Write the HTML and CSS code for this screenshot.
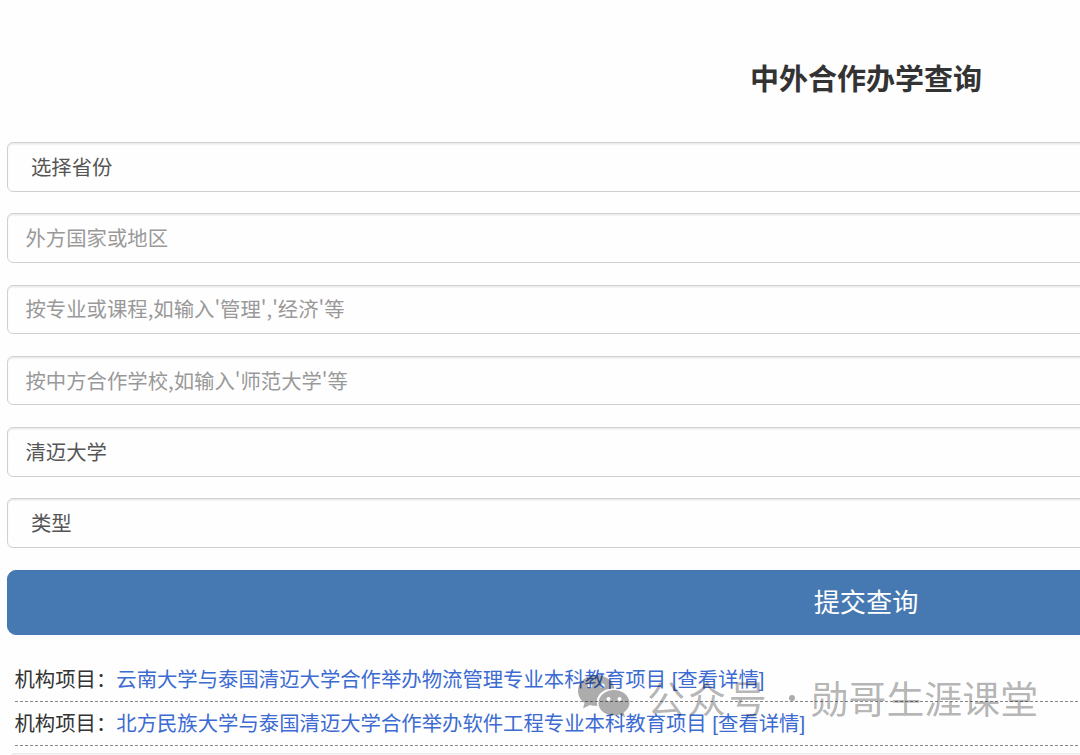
FILE: index.html
```html
<!DOCTYPE html>
<html lang="zh-CN">
<head>
    <meta charset="UTF-8">
    <title>中外合作办学查询</title>
    <link rel="stylesheet" href="styles.css">
</head>
<body>
    <div class="container">
        <h3 class="title">中外合作办学查询</h3>
        <form class="search-form">
            <select class="form-control">
                <option>选择省份</option>
            </select>
            <input class="form-control" type="text" placeholder="外方国家或地区">
            <input class="form-control" type="text" placeholder="按专业或课程,如输入'管理','经济'等">
            <input class="form-control" type="text" placeholder="按中方合作学校,如输入'师范大学'等">
            <input class="form-control" type="text" value="清迈大学">
            <select class="form-control">
                <option>类型</option>
            </select>
            <button class="submit-button" type="button">提交查询</button>
        </form>
        <div class="results">
            <p class="result">机构项目：<a href="#">云南大学与泰国清迈大学合作举办物流管理专业本科教育项目 [查看详情]</a></p>
            <p class="result">机构项目：<a href="#">北方民族大学与泰国清迈大学合作举办软件工程专业本科教育项目 [查看详情]</a></p>
        </div>
        <div class="panel"></div>
    </div>
    <div class="watermark">
        <svg class="wechat-icon" width="54" height="44" viewBox="0 0 54 44">
            <path fill-rule="evenodd" d="M19 1C9 1 1 8 1 17c0 5 2.500 9 6.500 12L6 34.500l7-3.500c2.500.7 5 1 7.500.8C17.500 22 26 14 37.500 14.500 36 6.500 28.500 1 19 1zM13 9.500a2.300 2.300 0 1 0 0 4.600 2.300 2.300 0 0 0 0-4.600zM25.500 9.500a2.300 2.300 0 1 0 0 4.600 2.300 2.300 0 0 0 0-4.600z"/>
            <path fill-rule="evenodd" d="M37 16c-8.500 0-15.500 5.700-15.500 13S28.500 41.500 37 41.500c2 0 4-.3 5.700-.9l5.300 2.600-1.300-4.700c3.500-2.300 5.800-5.600 5.800-9.500C52.500 21.700 45.500 16 37 16zM31.500 23a2 2 0 1 0 0 4 2 2 0 0 0 0-4zM42.500 23a2 2 0 1 0 0 4 2 2 0 0 0 0-4z"/>
        </svg>
        <span class="watermark-label">公众号</span>
        <span class="watermark-dot"></span>
        <span class="watermark-name">勋哥生涯课堂</span>
    </div>
</body>
</html>
```
FILE: styles.css
```css
body {
    margin: 0;
    height: 755px;
    overflow: hidden;
    background: #fefefe;
    color: #333;
    font-family: "Liberation Sans", "Noto Sans CJK SC", sans-serif;
    font-size: 20.36px;
}
.container {
    width: 1718px;
    padding: 59px 7px 0;
}
.title {
    margin: 0 0 41px;
    font-size: 29px;
    line-height: 42px;
    font-weight: bold;
    text-align: center;
}
.search-form {
    display: flex;
    flex-direction: column;
    gap: 21.8px;
}
.form-control {
    box-sizing: border-box;
    width: 100%;
    height: 49.500px;
    padding: 0 17.500px 2px;
    border: 1px solid #d0d0d0;
    border-radius: 6px;
    background: #fefefe;
    box-shadow: inset 0 1.500px 1.500px rgba(0, 0, 0, 0.08);
    color: #555;
    font-family: "Noto Sans CJK SC", sans-serif;
    font-size: 20.36px;
    appearance: none;
}
select.form-control {
    padding-left: 23px;
}
.form-control::placeholder {
    color: #999;
    opacity: 1;
}
.submit-button {
    height: 65.500px;
    padding: 0 0 3px;
    border: 1px solid #4477af;
    border-radius: 9px;
    background: #4679b2;
    color: #fff;
    font-family: "Noto Sans CJK SC", sans-serif;
    font-size: 26.200px;
}
.results {
    padding: 22.500px 7px 0 7.500px;
}
.result {
    box-sizing: border-box;
    height: 44.200px;
    margin: 0;
    border-bottom: 1px dashed #888;
    line-height: 44px;
    white-space: nowrap;
}
.result a {
    color: #3c6bd2;
    text-decoration: none;
}
.panel {
    height: 40px;
    margin: 7px 2px 0;
    border: 1px solid #e8e8e8;
    border-radius: 6px;
    background: #f5f5f5;
}
.watermark {
    position: absolute;
    left: 577px;
    top: 671px;
    display: flex;
    align-items: center;
    height: 50px;
    color: rgba(0, 0, 0, 0.3);
    font-family: "Noto Sans CJK SC", sans-serif;
    font-size: 37.900px;
    font-weight: 400;
    white-space: nowrap;
}
.wechat-icon {
    fill: rgba(0, 0, 0, 0.32);
}
.watermark-label {
    margin-left: 16px;
    letter-spacing: 3px;
}
.watermark-dot {
    width: 6px;
    height: 6px;
    margin: 4px 16px 0 19px;
    border-radius: 50%;
    background: rgba(0, 0, 0, 0.32);
}
```
